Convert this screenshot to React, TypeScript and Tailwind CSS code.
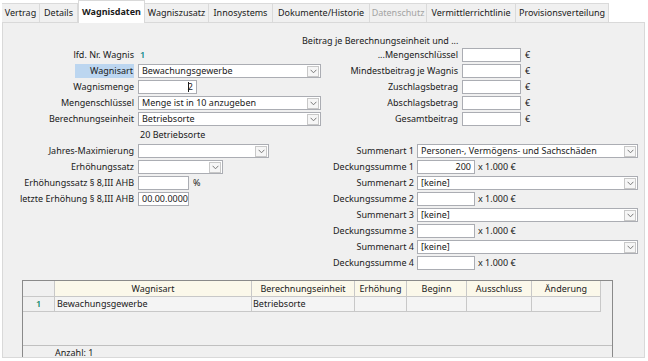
import React from "react";

const Chevron = () => (
  <svg width="7" height="5" viewBox="0 0 7 5">
    <path d="M0.6 0.8 L3.5 3.8 L6.4 0.8" fill="none" stroke="#7a7a7a" strokeWidth="1" />
  </svg>
);

function Select({ className, value }: { className: string; value?: string }) {
  return (
    <div className={`flex h-[14px] items-center border border-[#abadb3] bg-white ${className}`}>
      <span className="flex-1 overflow-hidden whitespace-nowrap pl-[3px] leading-[12px]">{value}</span>
      <span className="mr-[1px] flex h-[11px] w-[12px] shrink-0 items-center justify-center border border-[#c8c8c8] bg-[#f6f6f6]">
        <Chevron />
      </span>
    </div>
  );
}

function Input({
  className,
  value,
  right,
  caret,
}: {
  className: string;
  value?: string;
  right?: boolean;
  caret?: boolean;
}) {
  return (
    <div
      className={`flex h-[14px] items-center whitespace-nowrap border border-[#abadb3] bg-white px-[3px] leading-[12px] ${
        right ? "justify-end" : ""
      } ${className}`}
    >
      {caret && <span className="mr-[-1px] h-[10px] w-[1px] bg-[#1e1e1e]" />}
      {value}
    </div>
  );
}

const tabs: { label: string; w: string; active?: boolean; disabled?: boolean }[] = [
  { label: "Vertrag", w: "w-[38px]" },
  { label: "Details", w: "w-[38px]" },
  { label: "Wagnisdaten", w: "w-[67px]", active: true },
  { label: "Wagniszusatz", w: "w-[64px]" },
  { label: "Innosystems", w: "w-[64px]" },
  { label: "Dokumente/Historie", w: "w-[97px]" },
  { label: "Datenschutz", w: "w-[57px]", disabled: true },
  { label: "Vermittlerrichtlinie", w: "w-[89px]" },
  { label: "Provisionsverteilung", w: "w-[93px]" },
];

function LeftRow({ label, children, highlight }: { label?: string; children?: React.ReactNode; highlight?: boolean }) {
  return (
    <div className="flex h-[16px] items-center">
      <div className="flex w-[131px] justify-end">
        {highlight ? (
          <span className="flex h-[14px] items-center bg-[#bcd6f0] pl-[15px] pr-[1px]">{label}</span>
        ) : (
          <span>{label}</span>
        )}
      </div>
      <div className="ml-[4px] flex items-center">{children}</div>
    </div>
  );
}

function RightRowA({ label }: { label: string }) {
  return (
    <div className="flex h-[16px] items-center">
      <div className="w-[128px] text-right">{label}</div>
      <Input className="ml-[4px] w-[59px]" />
      <span className="ml-[4px]">€</span>
    </div>
  );
}

function RightRowB({ label, children }: { label: string; children: React.ReactNode }) {
  return (
    <div className="flex h-[16px] items-center">
      <div className="w-[84px] text-right">{label}</div>
      <div className="ml-[3px] flex items-center">{children}</div>
    </div>
  );
}

function Deckung({ value }: { value?: string }) {
  return (
    <>
      <Input className="w-[58px]" value={value} right />
      <span className="ml-[3px]">x 1.000 €</span>
    </>
  );
}

export default function App() {
  return (
    <div className="relative h-[361px] w-[648px] overflow-hidden bg-white font-['Noto_Sans',sans-serif] text-[9px] text-[#1a1a1a]">
      {/* Tabs */}
      <div className="flex h-[22px] items-end pl-[2px]">
        {tabs.map((t) =>
          t.active ? (
            <div
              key={t.label}
              className={`relative z-10 -mb-[1px] flex h-[23px] items-center justify-center border-x border-t border-[#d9d9d9] bg-white font-bold ${t.w}`}
            >
              {t.label}
            </div>
          ) : (
            <div
              key={t.label}
              className={`flex h-[19px] items-center justify-center whitespace-nowrap border-r border-t border-[#dadada] bg-[#f0f0f0] ${
                t.disabled ? "text-[#a3a3a3]" : ""
              } ${t.w}`}
            >
              {t.label}
            </div>
          )
        )}
      </div>

      {/* Panel */}
      <div className="ml-[2px] flex h-[336px] w-[643px] flex-col overflow-hidden border border-[#d9d9d9] bg-[#f0f0f0] pt-[12px]">
        <div className="flex h-[12px] items-center pl-[299px]">Beitrag je Berechnungseinheit und ...</div>

        {/* Section A */}
        <div className="flex">
          <div className="flex w-[327px] flex-col">
            <LeftRow label="lfd. Nr. Wagnis">
              <span className="ml-[2px] font-semibold text-[#168c8c]">1</span>
            </LeftRow>
            <LeftRow label="Wagnisart" highlight>
              <Select className="w-[183px]" value="Bewachungsgewerbe" />
            </LeftRow>
            <LeftRow label="Wagnismenge">
              <Input className="w-[59px]" value="2" right caret />
            </LeftRow>
            <LeftRow label="Mengenschlüssel">
              <Select className="w-[183px]" value="Menge ist in 10 anzugeben" />
            </LeftRow>
            <LeftRow label="Berechnungseinheit">
              <Select className="w-[183px]" value="Betriebsorte" />
            </LeftRow>
            <LeftRow>
              <span className="ml-[2px]">20 Betriebsorte</span>
            </LeftRow>
          </div>
          <div className="flex flex-col">
            <RightRowA label="...Mengenschlüssel" />
            <RightRowA label="Mindestbeitrag je Wagnis" />
            <RightRowA label="Zuschlagsbetrag" />
            <RightRowA label="Abschlagsbetrag" />
            <RightRowA label="Gesamtbeitrag" />
          </div>
        </div>

        {/* Section B */}
        <div className="flex">
          <div className="flex w-[327px] flex-col">
            <LeftRow label="Jahres-Maximierung">
              <Select className="w-[131px]" />
            </LeftRow>
            <LeftRow label="Erhöhungssatz">
              <Select className="w-[85px]" />
            </LeftRow>
            <LeftRow label="Erhöhungssatz § 8,III AHB">
              <Input className="w-[51px]" />
              <span className="ml-[4px]">%</span>
            </LeftRow>
            <LeftRow label="letzte Erhöhung § 8,III AHB">
              <Input className="w-[51px]" value="00.00.0000" />
            </LeftRow>
          </div>
          <div className="flex flex-col">
            <RightRowB label="Summenart 1">
              <Select className="w-[221px]" value="Personen-, Vermögens- und Sachschäden" />
            </RightRowB>
            <RightRowB label="Deckungssumme 1">
              <Deckung value="200" />
            </RightRowB>
            <RightRowB label="Summenart 2">
              <Select className="w-[221px]" value="[keine]" />
            </RightRowB>
            <RightRowB label="Deckungssumme 2">
              <Deckung />
            </RightRowB>
            <RightRowB label="Summenart 3">
              <Select className="w-[221px]" value="[keine]" />
            </RightRowB>
            <RightRowB label="Deckungssumme 3">
              <Deckung />
            </RightRowB>
            <RightRowB label="Summenart 4">
              <Select className="w-[221px]" value="[keine]" />
            </RightRowB>
            <RightRowB label="Deckungssumme 4">
              <Deckung />
            </RightRowB>
          </div>
        </div>

        {/* Table */}
        <div className="ml-[19px] mt-[9px] flex h-[120px] w-[591px] flex-col border-x border-t border-[#8a8a8a]">
          <div className="flex h-[16px]">
            <div className="w-[32px] border-b border-r border-[#c8c8c8] bg-[#f0f0f0]" />
            {[
              ["Wagnisart", "w-[197px]"],
              ["Berechnungseinheit", "w-[103px]"],
              ["Erhöhung", "w-[52px]"],
              ["Beginn", "w-[60px]"],
              ["Ausschluss", "w-[65px]"],
              ["Änderung", "w-[69px]"],
            ].map(([l, w]) => (
              <div key={l} className={`flex items-center justify-center border-b border-r border-[#c8c8c8] bg-[#fbf8ea] ${w}`}>
                {l}
              </div>
            ))}
          </div>
          <div className="flex h-[15px]">
            <div className="flex w-[32px] items-center justify-center border-b border-r border-[#c8c8c8] font-semibold text-[#168c6c]">1</div>
            <div className="flex w-[197px] items-center border-b border-r border-[#c8c8c8] bg-[#f4f4f4] pl-[2px]">Bewachungsgewerbe</div>
            <div className="flex w-[103px] items-center border-b border-r border-[#c8c8c8] bg-[#f4f4f4] pl-[1px]">Betriebsorte</div>
            <div className="w-[52px] border-b border-r border-[#c8c8c8] bg-[#f4f4f4]" />
            <div className="w-[60px] border-b border-r border-[#c8c8c8] bg-[#f4f4f4]" />
            <div className="w-[65px] border-b border-r border-[#c8c8c8] bg-[#f4f4f4]" />
            <div className="w-[69px] border-b border-r border-[#c8c8c8] bg-[#f4f4f4]" />
          </div>
          <div className="h-[33px]" />
          <div className="flex h-[14px] items-center border-t border-[#c0c0c0] pl-[32px]">Anzahl: 1</div>
        </div>
      </div>
    </div>
  );
}
